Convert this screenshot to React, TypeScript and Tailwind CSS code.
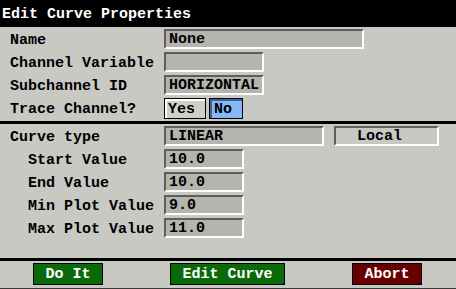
const mono = { fontFamily: '"Liberation Mono", "DejaVu Sans Mono", monospace' };

const Field = ({ value, width, plain }: { value: string; width: string; plain?: boolean }) => (
  <div
    className={`${width} h-[20px] flex items-center pl-[3px] pt-[1px] border-t-2 border-l-2 border-b-2 border-r-2 border-t-[#5e5e5c] border-l-[#5e5e5c] border-b-white border-r-white ${
      plain ? "" : "bg-[#b5b5b0]"
    }`}
  >
    <span className="text-[15px] font-bold leading-none text-black whitespace-pre">{value}</span>
  </div>
);

const Row = ({ label, indent, children }: { label: string; indent?: boolean; children: React.ReactNode }) => (
  <div className="flex items-center h-[20px]">
    <div className={`w-[164px] shrink-0 pt-[1px] ${indent ? "pl-[28px]" : "pl-[10px]"}`}>
      <span className="text-[15px] font-bold leading-none text-black whitespace-pre">{label}</span>
    </div>
    {children}
  </div>
);

const ActionButton = ({ label, width, color }: { label: string; width: string; color: string }) => (
  <div className={`${width} h-[22px] ${color} border border-black flex items-center justify-center`}>
    <span className="text-[15px] font-bold leading-none text-white">{label}</span>
  </div>
);

export default function App() {
  return (
    <div className="w-[456px] h-[289px] bg-[#c9c9c4] flex flex-col overflow-hidden" style={mono}>
      {/* title */}
      <div className="h-[27px] bg-black flex items-center pl-[2px] pt-[2px] shrink-0">
        <span className="text-[15px] font-bold leading-none text-white">Edit Curve Properties</span>
      </div>

      <div className="flex flex-col gap-[3px] mt-[2px]">
        <Row label="Name">
          <Field value="None" width="w-[200px]" />
        </Row>
        <Row label="Channel Variable">
          <Field value="" width="w-[100px]" />
        </Row>
        <Row label="Subchannel ID">
          <Field value="HORIZONTAL" width="w-[100px]" />
        </Row>
        <div className="flex items-center h-[21px]">
          <div className="w-[164px] shrink-0 pl-[10px] pt-[1px]">
            <span className="text-[15px] font-bold leading-none text-black">Trace Channel?</span>
          </div>
          <div className="w-[42px] h-[21px] border border-black bg-[#cfcfca] shadow-[inset_2px_2px_0_#ffffff] flex items-center pl-[3px] pt-[1px]">
            <span className="text-[15px] font-bold leading-none text-black">Yes</span>
          </div>
          <div className="ml-[3px] w-[34px] h-[21px] border border-black bg-[#86b8f6] shadow-[inset_2px_2px_0_#3c5f9a] flex items-center pl-[4px] pt-[1px]">
            <span className="text-[15px] font-bold leading-none text-black">No</span>
          </div>
        </div>
      </div>

      <div className="h-[3px] bg-black mt-[2px] shrink-0" />

      <div className="flex flex-col gap-[3px] mt-[2px]">
        <Row label="Curve type">
          <Field value="LINEAR" width="w-[160px]" />
          <div className="ml-[10px]">
            <Field value="  Local" width="w-[105px]" plain />
          </div>
        </Row>
        <Row label="Start Value" indent>
          <Field value="10.0" width="w-[80px]" />
        </Row>
        <Row label="End Value" indent>
          <Field value="10.0" width="w-[80px]" />
        </Row>
        <Row label="Min Plot Value" indent>
          <Field value="9.0" width="w-[80px]" />
        </Row>
        <Row label="Max Plot Value" indent>
          <Field value="11.0" width="w-[80px]" />
        </Row>
      </div>

      <div className="h-[3px] bg-black mt-[20px] shrink-0" />

      <div className="flex items-center mt-[2px]">
        <div className="ml-[33px]">
          <ActionButton label="Do It" width="w-[70px]" color="bg-[#0a6a0a]" />
        </div>
        <div className="ml-[67px]">
          <ActionButton label="Edit Curve" width="w-[115px]" color="bg-[#0a6a0a]" />
        </div>
        <div className="ml-[67px]">
          <ActionButton label="Abort" width="w-[70px]" color="bg-[#680000]" />
        </div>
      </div>

      <div className="h-[1px] bg-[#3a3a3a] mt-auto shrink-0" />
    </div>
  );
}
